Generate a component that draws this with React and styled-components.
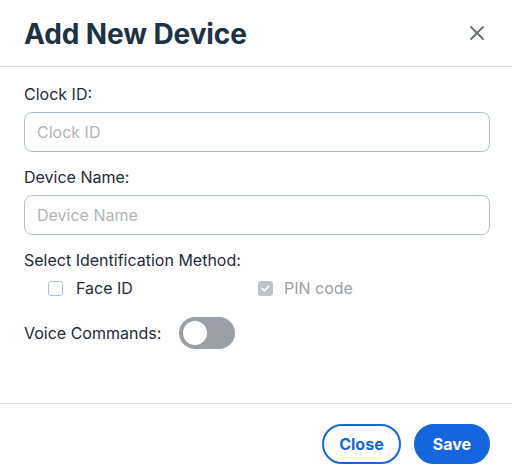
import styled, { createGlobalStyle } from "styled-components";

const Global = createGlobalStyle`
  html, body {
    margin: 0;
    padding: 0;
    background: #fff;
  }
  body {
    font-family: Inter, "Noto Sans", sans-serif;
    color: #1e2b3a;
  }
  * { box-sizing: border-box; }
`;

const Modal = styled.div`
  width: 512px;
  height: 475px;
  display: flex;
  flex-direction: column;
  background: #fff;
  overflow: hidden;
`;

const Header = styled.div`
  height: 67px;
  display: flex;
  align-items: center;
  justify-content: space-between;
  padding: 2px 24px 0 24px;
  border-bottom: 1px solid #ccdbe7;
`;

const Title = styled.h2`
  margin: 0;
  font-size: 28px;
  font-weight: 700;
  color: #1d3245;
  letter-spacing: -0.1px;
`;

const CloseIcon = styled.button`
  border: 0;
  background: none;
  padding: 0;
  width: 16px;
  height: 16px;
  margin-right: 3px;
  margin-top: -2px;
  display: flex;
  cursor: pointer;
`;

const Body = styled.div`
  flex: 1;
  padding: 15px 22px 0 24px;
  display: flex;
  flex-direction: column;
`;

const Group = styled.div`
  display: flex;
  flex-direction: column;
  margin-bottom: 13px;
`;

const Label = styled.label`
  font-size: 16px;
  line-height: 24px;
  color: #1e2b3a;
  margin-bottom: ${(p) => (p.$tight ? "0" : "6px")};
`;

const Input = styled.input`
  height: 40px;
  width: 100%;
  border: 1px solid #a9c2d8;
  border-radius: 8px;
  padding: 0 12px;
  font-family: Inter, "Noto Sans", sans-serif;
  font-size: 16px;
  color: #1e2b3a;
  outline: none;
  &::placeholder {
    color: #b1b5b9;
  }
`;

const Options = styled.div`
  display: grid;
  grid-template-columns: 210px 210px;
  padding-left: 24px;
  height: 32px;
  align-items: center;
`;

const Option = styled.label`
  display: flex;
  align-items: center;
  gap: ${(p) => (p.$disabled ? "11px" : "13px")};
  font-size: 16px;
  color: ${(p) => (p.$disabled ? "#9aa0a6" : "#1e2b3a")};
`;

const Box = styled.span`
  width: 15px;
  height: 15px;
  border-radius: 3px;
  border: 1px solid ${(p) => (p.$checked ? "#bfc3c7" : "#a9c2d8")};
  background: ${(p) => (p.$checked ? "#bfc3c7" : "#fff")};
  display: flex;
  align-items: center;
  justify-content: center;
`;

const ToggleRow = styled.div`
  display: flex;
  align-items: center;
  gap: 18px;
  height: 32px;
`;

const Switch = styled.span`
  width: 56px;
  height: 32px;
  border-radius: 16px;
  background: #9aa0a6;
  padding: 4px;
  display: flex;
  align-items: center;
`;

const Knob = styled.span`
  width: 24px;
  height: 24px;
  border-radius: 50%;
  background: #fff;
`;

const Footer = styled.div`
  height: 72px;
  border-top: 1px solid #dee2e6;
  display: flex;
  justify-content: flex-end;
  align-items: flex-start;
  gap: 13px;
  padding: 20px 22px 0 24px;
`;

const Button = styled.button`
  height: 40px;
  padding: 0 ${(p) => (p.$primary ? "17px" : "15px")};
  border-radius: 20px;
  border: 2px solid #1565de;
  background: ${(p) => (p.$primary ? "#1565de" : "#fff")};
  color: ${(p) => (p.$primary ? "#fff" : "#1565de")};
  font-family: Inter, "Noto Sans", sans-serif;
  font-size: 16px;
  font-weight: 700;
  cursor: pointer;
`;

export default function App() {
  return (
    <>
      <Global />
      <Modal>
        <Header>
          <Title>Add New Device</Title>
          <CloseIcon aria-label="Close">
            <svg width="16" height="16" viewBox="0 0 16 16">
              <path d="M2 2L14 14M14 2L2 14" stroke="#6c757d" strokeWidth="2" strokeLinecap="round" />
            </svg>
          </CloseIcon>
        </Header>
        <Body>
          <Group>
            <Label>Clock ID:</Label>
            <Input placeholder="Clock ID" />
          </Group>
          <Group>
            <Label>Device Name:</Label>
            <Input placeholder="Device Name" />
          </Group>
          <Group>
            <Label $tight>Select Identification Method:</Label>
            <Options>
              <Option>
                <Box />
                Face ID
              </Option>
              <Option $disabled>
                <Box $checked>
                  <svg width="11" height="11" viewBox="0 0 12 12">
                    <path d="M2.5 6.2L5 8.5L9.5 3.5" fill="none" stroke="#fff" strokeWidth="1.8" strokeLinecap="round" strokeLinejoin="round" />
                  </svg>
                </Box>
                PIN code
              </Option>
            </Options>
          </Group>
          <ToggleRow>
            <Label $tight>Voice Commands:</Label>
            <Switch>
              <Knob />
            </Switch>
          </ToggleRow>
        </Body>
        <Footer>
          <Button>Close</Button>
          <Button $primary>Save</Button>
        </Footer>
      </Modal>
    </>
  );
}
